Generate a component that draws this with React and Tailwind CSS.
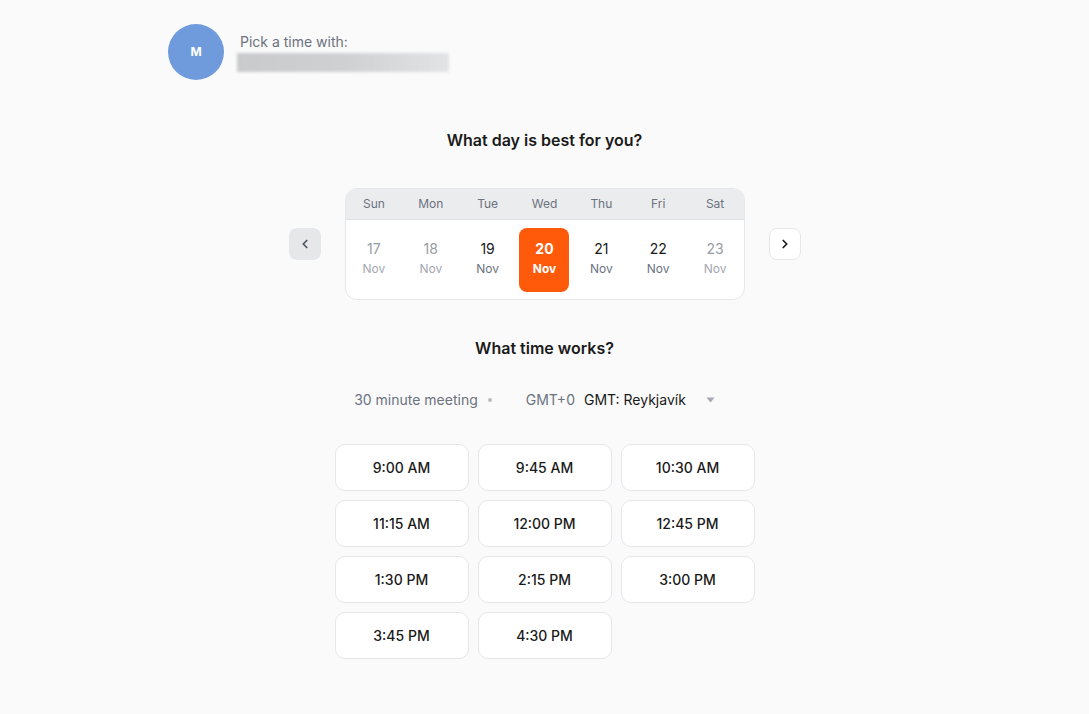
import React from 'react';
import { ChevronLeft, ChevronRight } from 'lucide-react';

const days = [
  { name: 'Sun', num: 17, enabled: false },
  { name: 'Mon', num: 18, enabled: false },
  { name: 'Tue', num: 19, enabled: true },
  { name: 'Wed', num: 20, enabled: true, selected: true },
  { name: 'Thu', num: 21, enabled: true },
  { name: 'Fri', num: 22, enabled: true },
  { name: 'Sat', num: 23, enabled: false },
];

const slots = [
  '9:00 AM', '9:45 AM', '10:30 AM',
  '11:15 AM', '12:00 PM', '12:45 PM',
  '1:30 PM', '2:15 PM', '3:00 PM',
  '3:45 PM', '4:30 PM',
];

const App = () => {
  return (
    <div className="min-h-screen bg-[#fafafa] text-[#1a1a1a] font-['Inter',sans-serif]">
      <div className="max-w-[753px] mx-auto pt-6 pb-12">
        {/* Host header */}
        <div className="flex items-start gap-4">
          <div className="w-14 h-14 rounded-full bg-[#6f9bdc] flex items-center justify-center text-white text-[12px] font-bold">
            M
          </div>
          <div className="pt-[8px]">
            <p className="text-[14px] leading-5 text-[#6b7280]">Pick a time with:</p>
            <div className="mt-[1px] -ml-[3px] w-[212px] h-[19px] bg-gradient-to-r from-[#c9cacc] via-[#cfd0d2] to-[#e2e3e5] blur-[1.5px]"></div>
          </div>
        </div>

        {/* Day picker */}
        <h2 className="mt-[48px] text-center text-[16px] leading-6 font-semibold">What day is best for you?</h2>
        <div className="mt-9 flex items-center justify-center gap-6">
          <button className="w-8 h-8 rounded-lg bg-[#e6e7e9] flex items-center justify-center text-[#4b5563]">
            <ChevronLeft className="w-3.5 h-3.5" strokeWidth={3} />
          </button>
          <div className="w-[400px] rounded-xl border border-[#e5e7eb] bg-white overflow-hidden">
            <div className="grid grid-cols-7 bg-[#ebecee] border-b border-[#dfe1e4] h-[31px] items-center">
              {days.map((d) => (
                <span key={d.name} className="text-center text-[12px] text-[#6b7280]">{d.name}</span>
              ))}
            </div>
            <div className="grid grid-cols-7 pt-2 pb-[7px]">
              {days.map((d) => (
                <div key={d.num} className="flex justify-center">
                  <div
                    className={
                      d.selected
                        ? 'w-[50px] h-16 rounded-lg bg-[#ff5a0a] text-white flex flex-col items-center pt-[11px]'
                        : 'w-[50px] h-16 flex flex-col items-center pt-[11px]'
                    }
                  >
                    <span
                      className={
                        d.selected
                          ? 'text-[14px] leading-5 font-bold'
                          : d.enabled
                          ? 'text-[14px] leading-5 text-[#1a1a1a]'
                          : 'text-[14px] leading-5 text-[#979ca4]'
                      }
                    >
                      {d.num}
                    </span>
                    <span
                      className={
                        d.selected
                          ? 'mt-[2px] text-[12px] leading-4 font-bold'
                          : d.enabled
                          ? 'mt-[2px] text-[12px] leading-4 text-[#6b7280]'
                          : 'mt-[2px] text-[12px] leading-4 text-[#a3a8b0]'
                      }
                    >
                      Nov
                    </span>
                  </div>
                </div>
              ))}
            </div>
          </div>
          <button className="w-8 h-8 rounded-lg bg-white border border-[#e5e7eb] flex items-center justify-center text-[#1a1a1a]">
            <ChevronRight className="w-3.5 h-3.5" strokeWidth={3} />
          </button>
        </div>

        {/* Time picker */}
        <h2 className="mt-[36px] text-center text-[16px] leading-6 font-semibold">What time works?</h2>
        <div className="mt-[30px] flex items-center justify-center pr-5 text-[14px] leading-5">
          <span className="text-[#6b7280]">30 minute meeting</span>
          <span className="ml-[10px] w-1 h-1 rounded-full bg-[#b7bbc1]"></span>
          <span className="ml-[34px] text-[#6b7280]">GMT+0</span>
          <span className="ml-[9px] text-[#1a1a1a]">GMT: Reykjavík</span>
          <svg className="ml-[20px]" width="9" height="6" viewBox="0 0 9 6">
            <path d="M0.5 0.5 L8.5 0.5 L4.5 5.5 Z" fill="#a3a8b0" />
          </svg>
        </div>

        <div className="mt-[34px] mx-auto w-[420px] grid grid-cols-3 gap-[9px]">
          {slots.map((s) => (
            <button
              key={s}
              className="h-[47px] rounded-[10px] bg-white border border-[#e5e7eb] text-[14px] font-medium text-[#1a1a1a]"
            >
              {s}
            </button>
          ))}
        </div>
      </div>
    </div>
  );
};

export default App;
